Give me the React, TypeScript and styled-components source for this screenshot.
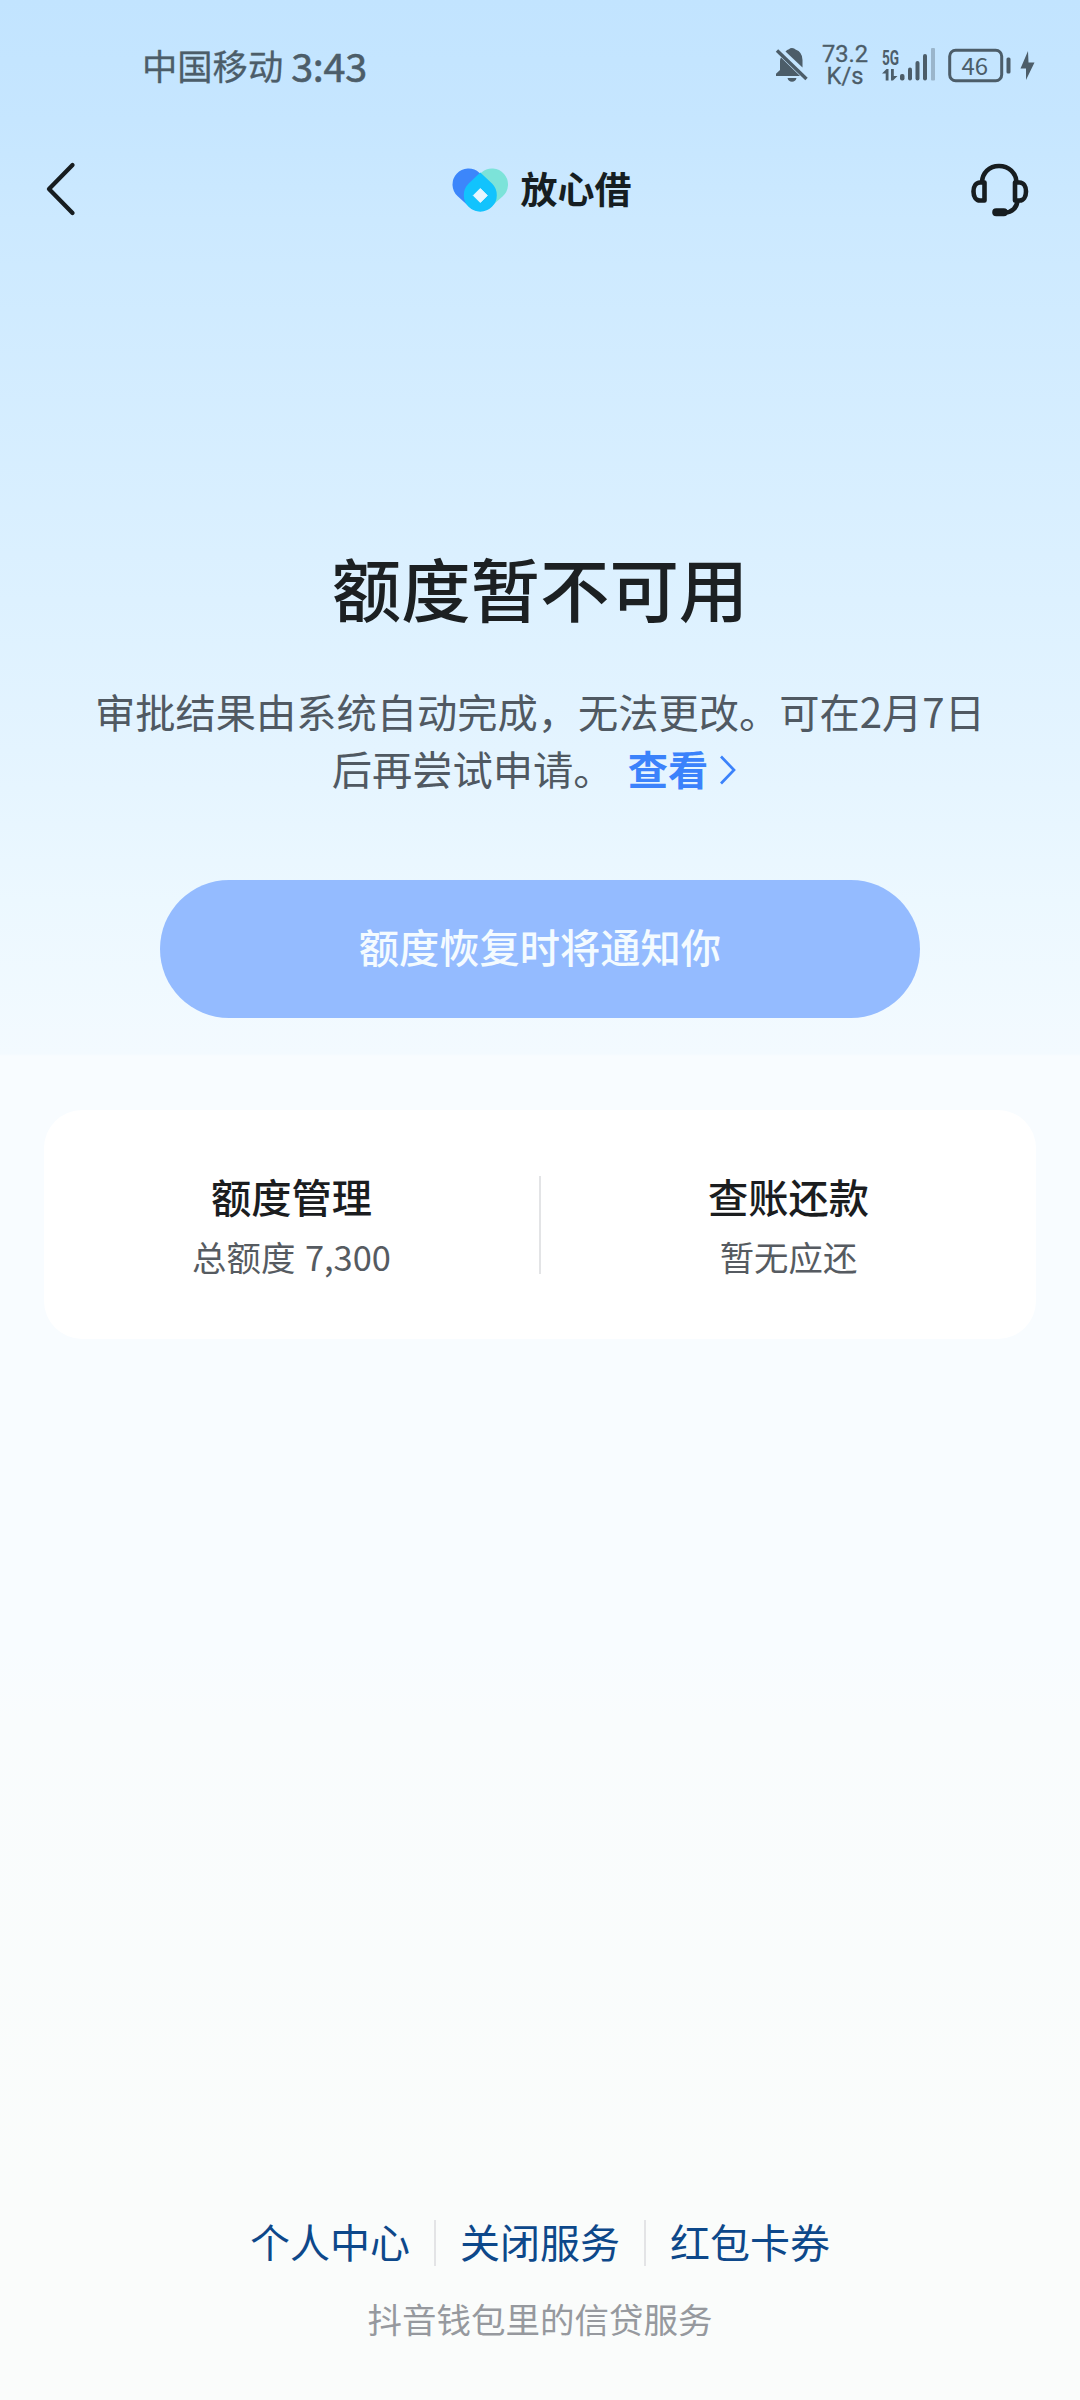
import React from 'react';
import styled, { createGlobalStyle } from 'styled-components';

const GlobalStyle = createGlobalStyle`
  * { box-sizing: border-box; }
  html, body { margin: 0; padding: 0; }
  body {
    font-family: "Noto Sans CJK SC", "Noto Sans", sans-serif;
    -webkit-font-smoothing: antialiased;
  }
  button { font-family: inherit; border: 0; padding: 0; background: none; }
`;

const Page = styled.div`
  width: 1080px;
  height: 2400px;
  display: flex;
  flex-direction: column;
  overflow: hidden;
  background: linear-gradient(180deg, #c2e4ff 0px, #c6e6ff 120px, #cce9ff 220px, #ddf1ff 600px, #e4f4ff 750px, #ecf8ff 900px, #f3faff 1054px, #f8fcff 1056px, #f8fcff 1650px, #f9fcfd 1720px, #fafcfb 2200px, #fafcfb 2400px);
`;

const StatusBar = styled.header`
  height: 130px;
  padding: 0 44px 0 142px;
  display: flex;
  align-items: center;
  justify-content: space-between;
  color: #4c5d69;
`;

const Carrier = styled.div`
  display: flex;
  align-items: center;
  gap: 8px;
  font-size: 35.3px;
  line-height: 50px;
  -webkit-text-stroke: 0.3px currentColor;
`;

const Clock = styled.span`
  font-size: 39.5px;
  letter-spacing: -0.3px;
  -webkit-text-stroke: 0.6px currentColor;
`;

const StatusIcons = styled.div`
  display: flex;
  align-items: center;
`;

const NetSpeed = styled.div`
  width: 50px;
  margin-left: 9px;
  font-family: Roboto, "Noto Sans", sans-serif;
  font-size: 23.7px;
  line-height: 22px;
  text-align: center;
  -webkit-text-stroke: 0.3px currentColor;
`;

const NavBar = styled.nav`
  height: 120px;
  padding: 0 50px 0 43px;
  display: flex;
  align-items: center;
  justify-content: space-between;
`;

const IconButton = styled.button`
  display: flex;
  width: 60px;
  height: 60px;
`;

const Brand = styled.div`
  padding-left: 10px;
  display: flex;
  align-items: center;
  gap: 13px;
`;

const BrandName = styled.span`
  padding-bottom: 4px;
  font-size: 37px;
  line-height: 44px;
  font-weight: 700;
  color: #161e22;
`;

const Hero = styled.section`
  padding-top: 285px;
  display: flex;
  flex-direction: column;
  align-items: center;
`;

const Title = styled.h1`
  margin: 0;
  font-size: 69.4px;
  line-height: 104px;
  font-weight: 500;
  color: #1c2022;
`;

const Description = styled.p`
  margin: 44px 0 0;
  width: 900px;
  font-size: 40.25px;
  line-height: 56.5px;
  text-align: center;
  color: #505962;
`;

const DetailLink = styled.a`
  margin: 0 12px 0 14px;
  font-weight: 700;
  color: #3b82fb;

  svg { margin-left: 11px; vertical-align: 0; }
`;

const NotifyButton = styled.button`
  margin-top: 84px;
  padding-bottom: 6px;
  width: 760px;
  height: 138px;
  border-radius: 69px;
  background: #94bbff;
  color: #f4fbff;
  font-size: 40.25px;
  line-height: 60px;
  font-weight: 500;
`;

const Card = styled.section`
  margin: 92px 44px 0;
  height: 229px;
  border-radius: 38px;
  background: #fff;
  display: grid;
  grid-template-columns: 1fr 2px 1fr;
  align-items: center;
`;

const CardItem = styled.div`
  padding-top: 3px;
  display: flex;
  flex-direction: column;
  align-items: center;
`;

const CardTitle = styled.div`
  font-size: 40.25px;
  line-height: 60px;
  font-weight: 500;
  color: #1b1d1f;
`;

const CardValue = styled.div`
  font-size: 34.4px;
  line-height: 60px;
  word-spacing: 2px;
  color: #565b61;
`;

const Rule = styled.span<{ $height: number }>`
  width: 2px;
  height: ${(p) => p.$height}px;
  background: #e3e4e6;
`;

const Footer = styled.footer`
  margin-top: auto;
  padding-bottom: 56px;
  display: flex;
  flex-direction: column;
  align-items: center;
`;

const Links = styled.div`
  display: flex;
  align-items: center;
  gap: 24px;
`;

const FooterLink = styled.a`
  padding-bottom: 4px;
  font-size: 40px;
  line-height: 60px;
  color: #0d488a;
`;

const Note = styled.div`
  margin-top: 17px;
  font-size: 34.5px;
  line-height: 52px;
  color: #96999e;
`;

const MutedBell = () => (
  <svg width="36" height="36" viewBox="0 0 36 36" fill="currentColor">
    <path d="M10.500 4.500Q12 2.500 14 2.200Q15 1 17 1Q19.500 1 20.500 2.500Q27.500 5 27.500 13V20.500Z" />
    <path d="M6 10.500L25 29H1V26.800L5 23V14Q5 12 6 10.500Z" />
    <path d="M12.500 31H21.500Q20.500 34.800 17 34.800Q13.500 34.800 12.500 31Z" />
    <path d="M2 3.500L31.500 32" stroke="currentColor" strokeWidth="3.400" />
  </svg>
);

const SignalGroup = styled.div`
  margin-left: 12px;
  display: flex;
`;

const NetworkColumn = styled.div`
  width: 18px;
  display: flex;
  flex-direction: column;
  align-items: flex-start;
`;

const NetworkType = styled.span`
  font-family: Roboto, sans-serif;
  font-size: 20px;
  line-height: 21px;
  height: 22px;
  padding-top: 1px;
  font-weight: 700;
  transform: scaleX(0.68);
  transform-origin: left center;
`;

const Signal = () => (
  <SignalGroup>
    <NetworkColumn>
      <NetworkType>5G</NetworkType>
      <svg width="16" height="12" viewBox="0 0 16 12" fill="currentColor">
        <path d="M0 4.500L4.500 0H6.500V11.500H3.700V4.500ZM9 0H11.800V7H15.500L11 11.500H9Z" />
      </svg>
    </NetworkColumn>
    <svg width="36" height="36" viewBox="18 0 36 36" fill="currentColor">
      <rect x="18" y="27" width="4.500" height="6.500" rx="2" />
      <rect x="26" y="20.500" width="4" height="13" rx="2" />
      <rect x="33.500" y="14" width="4" height="19.500" rx="2" />
      <rect x="41" y="7" width="4" height="26.500" rx="2" />
      <rect x="49" y="1" width="4" height="32.500" rx="1" opacity="0.35" />
    </svg>
  </SignalGroup>
);

const BatteryIcon = styled.svg`
  margin-left: 12px;
`;

const BatteryText = styled.text`
  font-family: "Noto Sans CJK SC", sans-serif;
  font-size: 24px;
`;

const Battery = () => (
  <BatteryIcon width="88" height="36" viewBox="0 0 88 36" fill="currentColor">
    <rect x="1.700" y="3.200" width="52" height="30.500" rx="6" fill="none" stroke="currentColor" strokeWidth="3" />
    <BatteryText x="26.700" y="27.500" textAnchor="middle">46</BatteryText>
    <rect x="58.500" y="10.500" width="4" height="16" rx="1.500" />
    <path d="M80 4L72.500 21.500H78V33L86.500 15.500H80.500Z" />
  </BatteryIcon>
);

const BackIcon = () => (
  <svg width="60" height="60" viewBox="0 0 60 60" fill="none" stroke="#171d20" strokeWidth="4.300" strokeLinecap="round" strokeLinejoin="round">
    <path d="M29.500 5L6 29L29.500 53" />
  </svg>
);

const HeadsetIcon = () => (
  <svg width="60" height="60" viewBox="0 0 60 60" fill="none" stroke="#171d20" strokeWidth="4.600" strokeLinejoin="round">
    <path d="M12 22C12.500 13 19 6 29 6S46 13 46.500 22" />
    <path d="M14.500 22.500V40.500H10C6 40.500 3.500 36.500 3.500 31.500S6 22.500 10 22.500Z" />
    <path d="M45 22.500V40.500H49.500C53.500 40.500 56 36.500 56 31.500S53.500 22.500 49.500 22.500Z" />
    <path d="M47.500 40.500C47 47.500 42 52.500 35 52.500" />
    <rect x="24.500" y="50.500" width="11" height="3.500" rx="1.700" />
  </svg>
);

const BrandLogo = () => (
  <svg width="56" height="44" viewBox="0 0 56 44">
    <path d="M40 16.500L28 27" stroke="#7ce3d9" strokeWidth="32" strokeLinecap="round" />
    <path d="M16.500 16.500L28 27" stroke="#3c86fb" strokeWidth="32" strokeLinecap="round" />
    <path d="M28.300 4.500L40 15.500A16.500 16.500 0 1 1 16.600 15.500Z" fill="#12c3fd" />
    <path d="M28.300 20.500L35.300 27.500L28.300 34.500L21.300 27.500Z" fill="#e6f6ff" stroke="#e6f6ff" strokeLinejoin="round" />
  </svg>
);

const LinkArrow = () => (
  <svg width="17" height="30" viewBox="0 0 17 30" fill="none" stroke="#3b82fb" strokeWidth="2.700">
    <path d="M2 1.500L15 15L2 28.500" />
  </svg>
);

export default function App() {
  return (
    <>
      <GlobalStyle />
      <Page>
        <StatusBar>
          <Carrier>
            <span>中国移动</span>
            <Clock>3:43</Clock>
          </Carrier>
          <StatusIcons>
            <MutedBell />
            <NetSpeed>73.2<br />K/s</NetSpeed>
            <Signal />
            <Battery />
          </StatusIcons>
        </StatusBar>
        <NavBar>
          <IconButton aria-label="返回"><BackIcon /></IconButton>
          <Brand>
            <BrandLogo />
            <BrandName>放心借</BrandName>
          </Brand>
          <IconButton aria-label="客服"><HeadsetIcon /></IconButton>
        </NavBar>
        <Hero>
          <Title>额度暂不可用</Title>
          <Description>
            审批结果由系统自动完成，无法更改。可在2月7日后再尝试申请。
            <DetailLink>查看<LinkArrow /></DetailLink>
          </Description>
          <NotifyButton>额度恢复时将通知你</NotifyButton>
        </Hero>
        <Card>
          <CardItem>
            <CardTitle>额度管理</CardTitle>
            <CardValue>总额度 7,300</CardValue>
          </CardItem>
          <Rule $height={98} />
          <CardItem>
            <CardTitle>查账还款</CardTitle>
            <CardValue>暂无应还</CardValue>
          </CardItem>
        </Card>
        <Footer>
          <Links>
            <FooterLink>个人中心</FooterLink>
            <Rule $height={46} />
            <FooterLink>关闭服务</FooterLink>
            <Rule $height={46} />
            <FooterLink>红包卡券</FooterLink>
          </Links>
          <Note>抖音钱包里的信贷服务</Note>
        </Footer>
      </Page>
    </>
  );
}
